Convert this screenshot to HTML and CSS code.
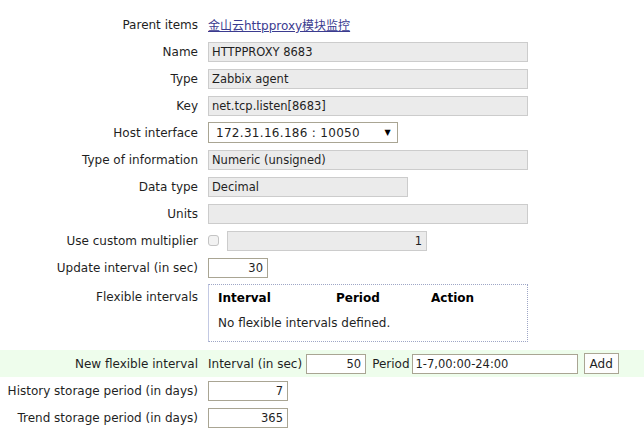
FILE: index.html
```html
<!DOCTYPE html>
<html>
<head>
<meta charset="utf-8">
<link rel="stylesheet" href="styles.css">
</head>
<body>
<div class="form">
  <div class="row">
    <div class="label">Parent items</div>
    <div class="field"><a class="link" href="#">金山云httpproxy模块监控</a></div>
  </div>
  <div class="row">
    <div class="label">Name</div>
    <div class="field"><input class="inp dis w320" value="HTTPPROXY 8683" disabled></div>
  </div>
  <div class="row">
    <div class="label">Type</div>
    <div class="field"><input class="inp dis w320" value="Zabbix agent" disabled></div>
  </div>
  <div class="row">
    <div class="label">Key</div>
    <div class="field"><input class="inp dis w320" value="net.tcp.listen[8683]" disabled></div>
  </div>
  <div class="row">
    <div class="label">Host interface</div>
    <div class="field"><div class="select"><span>172.31.16.186 : 10050</span><span class="arrow">▼</span></div></div>
  </div>
  <div class="row">
    <div class="label">Type of information</div>
    <div class="field"><input class="inp dis w320" value="Numeric (unsigned)" disabled></div>
  </div>
  <div class="row">
    <div class="label">Data type</div>
    <div class="field"><input class="inp dis w200" value="Decimal" disabled></div>
  </div>
  <div class="row">
    <div class="label">Units</div>
    <div class="field"><input class="inp dis w320" value="" disabled></div>
  </div>
  <div class="row">
    <div class="label">Use custom multiplier</div>
    <div class="field"><span class="check"></span><input class="inp dis w200 num" value="1" disabled></div>
  </div>
  <div class="row">
    <div class="label">Update interval (in sec)</div>
    <div class="field"><input class="inp w60 num" value="30"></div>
  </div>
  <div class="row flex-row">
    <div class="label top">Flexible intervals</div>
    <div class="field top">
      <div class="flexbox">
        <div class="fhead"><span class="c1">Interval</span><span class="c2">Period</span><span class="c3">Action</span></div>
        <div class="fempty">No flexible intervals defined.</div>
      </div>
    </div>
  </div>
  <div class="row green">
    <div class="label">New flexible interval</div>
    <div class="field">
      <span class="txt">Interval (in sec)</span>
      <input class="inp w60 num" value="50">
      <span class="txt txt-period">Period</span>
      <input class="inp w166" value="1-7,00:00-24:00">
      <button class="btn">Add</button>
    </div>
  </div>
  <div class="row">
    <div class="label">History storage period (in days)</div>
    <div class="field"><input class="inp w80 num" value="7"></div>
  </div>
  <div class="row">
    <div class="label">Trend storage period (in days)</div>
    <div class="field"><input class="inp w80 num" value="365"></div>
  </div>
</div>
</body>
</html>
```
FILE: styles.css
```css
html, body {
  margin: 0;
  padding: 0;
  background: #ffffff;
}
body {
  font-family: "DejaVu Sans", Verdana, sans-serif;
  font-size: 12px;
  color: #1f1f1f;
}
.form {
  padding-top: 11px;
  display: flex;
  flex-direction: column;
}
.row {
  display: grid;
  grid-template-columns: 198px 1fr;
  column-gap: 10px;
  height: 27px;
  align-items: center;
}
.label {
  text-align: right;
  white-space: nowrap;
}
.field {
  display: flex;
  align-items: center;
  white-space: nowrap;
}
.link {
  color: #3b3b8f;
  text-decoration: underline;
  font-family: "DejaVu Sans", "Noto Sans CJK SC", sans-serif;
}
.inp {
  box-sizing: border-box;
  height: 20px;
  margin: 0;
  padding: 0 4px 0 3px;
  font-family: "DejaVu Sans", Verdana, sans-serif;
  font-size: 11.5px;
  color: #1f1f1f;
  border: 1px solid #a9a593;
  background: #ffffff;
  outline: none;
}
.inp.dis {
  background: #ebebeb;
  border-color: #cccccc;
  color: #1f1f1f;
  -webkit-text-fill-color: #1f1f1f;
  opacity: 1;
}
.num { text-align: right; }
.w320 { width: 320px; }
.w200 { width: 200px; }
.w60 { width: 60px; }
.w80 { width: 80px; }
.w166 { width: 166px; }
.select {
  box-sizing: border-box;
  width: 190px;
  height: 21px;
  border: 1px solid #a9a593;
  display: flex;
  align-items: center;
  justify-content: space-between;
  padding: 0 6px 0 7px;
  font-family: "DejaVu Sans", Verdana, sans-serif;
  font-size: 12px;
  letter-spacing: 0.3px;
}
.select .arrow {
  font-size: 8px;
  color: #000;
}
.check {
  box-sizing: border-box;
  width: 11px;
  height: 11px;
  border: 1px solid #c4c4c4;
  border-radius: 3px;
  background: #f2f2f2;
  margin-right: 8px;
  margin-left: 0;
}
.flex-row {
  height: 69px;
  align-items: start;
}
.label.top {
  padding-top: 9px;
}
.field.top {
  padding-top: 3px;
}
.flexbox {
  box-sizing: border-box;
  width: 320px;
  height: 58px;
  border: 1px dotted #9ea6c6;
  border-left: 1px solid #c3c9e3;
  padding: 5px 9px 0 9px;
}
.fhead {
  display: flex;
  font-weight: bold;
  color: #000;
  height: 16px;
  line-height: 16px;
}
.c1 { width: 118px; }
.c2 { width: 95px; }
.fempty {
  margin-top: 10px;
}
.green {
  background: #eefdec;
}
.txt {
  margin-right: 4px;
}
.green .inp + .txt {
  margin-left: 6px;
}
.txt-period {
  margin-right: 2px;
}
.btn {
  box-sizing: border-box;
  height: 21px;
  margin-left: 6px;
  padding: 0 5px;
  border: 1px solid #a9a593;
  background: #fdfdfd;
  font-family: "DejaVu Sans", Verdana, sans-serif;
  font-size: 12px;
  color: #1f1f1f;
}
```
